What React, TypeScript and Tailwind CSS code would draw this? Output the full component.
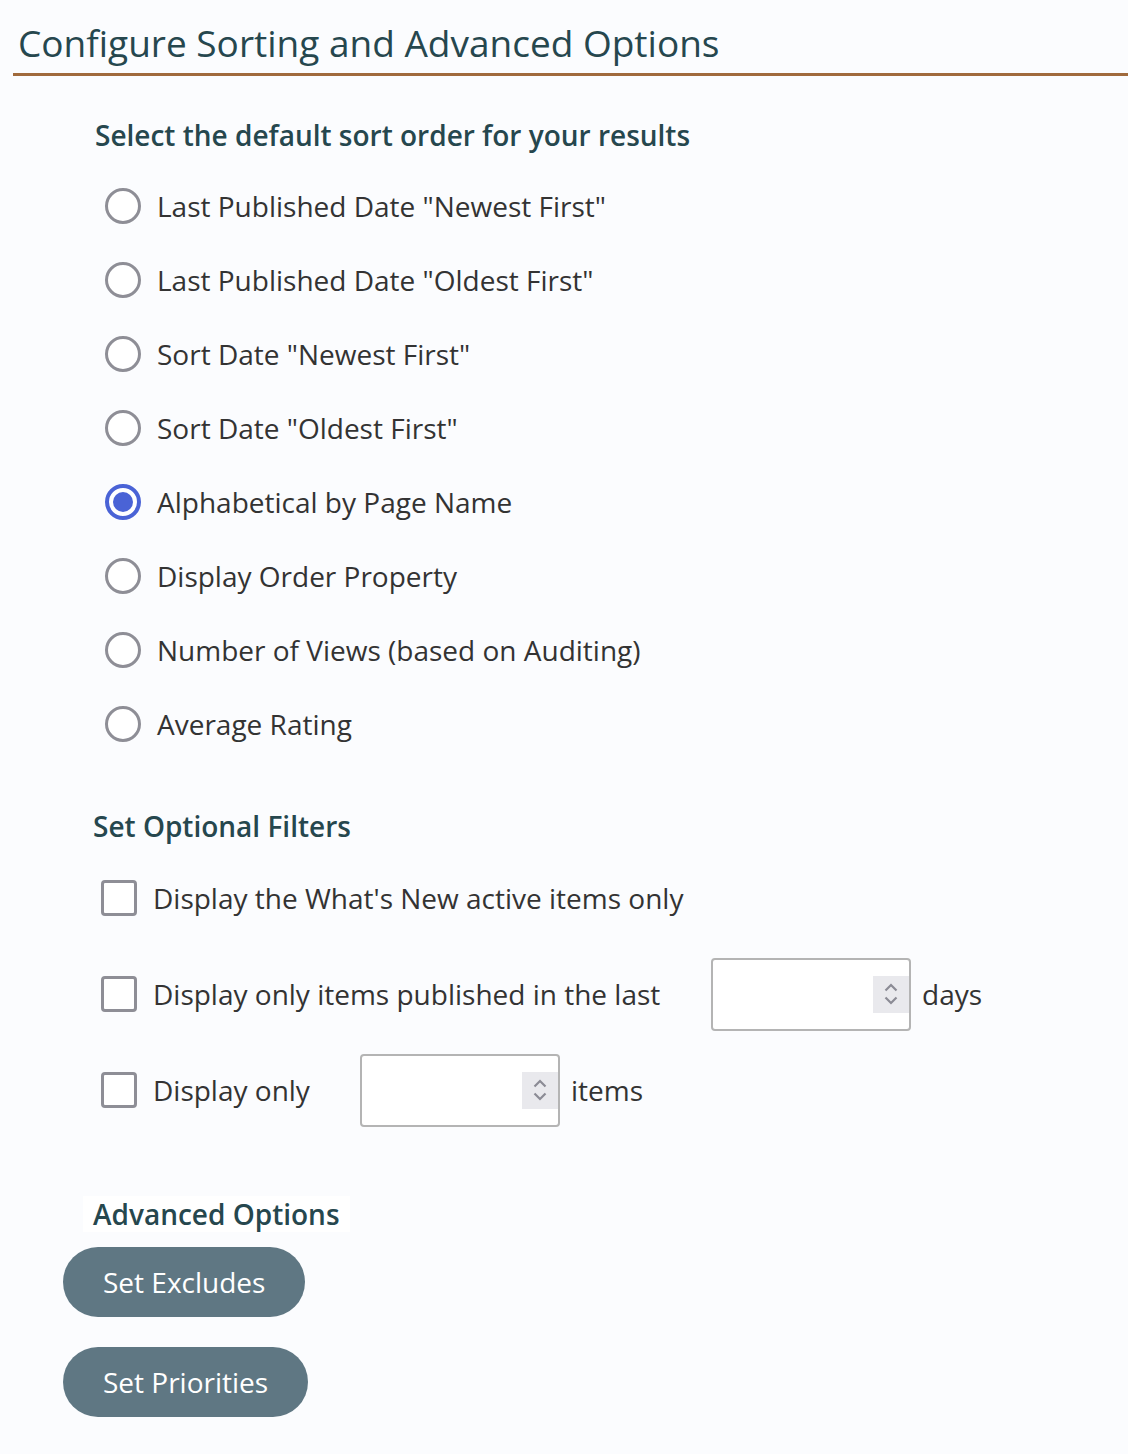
import { useState } from "react";

const sortOptions = [
  'Last Published Date "Newest First"',
  'Last Published Date "Oldest First"',
  'Sort Date "Newest First"',
  'Sort Date "Oldest First"',
  "Alphabetical by Page Name",
  "Display Order Property",
  "Number of Views (based on Auditing)",
  "Average Rating",
];

function Radio({ checked }: { checked: boolean }) {
  return checked ? (
    <span className="flex h-[36px] w-[36px] shrink-0 items-center justify-center rounded-full border-[4px] border-[#4a63d6] bg-white">
      <span className="h-[20px] w-[20px] rounded-full bg-[#4a63d6]" />
    </span>
  ) : (
    <span className="h-[36px] w-[36px] shrink-0 rounded-full border-[3px] border-[#8e8e96] bg-white" />
  );
}

function Checkbox() {
  return (
    <span className="h-[36px] w-[36px] shrink-0 rounded-[4px] border-[3px] border-[#8e8e96] bg-white" />
  );
}

function NumberBox() {
  return (
    <div className="flex h-[73px] w-[200px] items-center justify-end rounded-[4px] border-2 border-[#b4b4b4] bg-white">
      <div className="flex h-[37px] w-[36px] flex-col items-center justify-center gap-[4px] bg-[#e9e9ed]">
        <svg width="16" height="10" viewBox="0 0 16 10" fill="none">
          <path d="M2.5 8.5 8 3 13.5 8.5" stroke="#8b8b95" strokeWidth="2.2" />
        </svg>
        <svg width="16" height="10" viewBox="0 0 16 10" fill="none">
          <path d="M2.5 1.5 8 7 13.5 1.5" stroke="#8b8b95" strokeWidth="2.2" />
        </svg>
      </div>
    </div>
  );
}

export default function App() {
  const [sort] = useState(4);

  return (
    <div
      className="min-h-screen bg-[#fbfcfe] pb-[37px] text-[#333]"
      style={{ fontFamily: '"Open Sans", sans-serif' }}
    >
      {/* Title */}
      <div className="pl-[13px]">
        <h1 className="border-b-[3px] border-[#a06a3c] pb-[7px] pl-[5px] pt-[19px] text-[37px] leading-[47px] text-[#26474e]">
          Configure Sorting and Advanced Options
        </h1>
      </div>

      {/* Sort order */}
      <h2 className="ml-[95px] mt-[39px] text-[28px] font-semibold leading-[40px] text-[#26474e]">
        Select the default sort order for your results
      </h2>
      <div className="ml-[105px] mt-[14px] flex flex-col">
        {sortOptions.map((label, i) => (
          <label key={label} className="flex h-[74px] items-center gap-[16px]">
            <Radio checked={i === sort} />
            <span className="text-[28px] leading-[40px]">{label}</span>
          </label>
        ))}
      </div>

      {/* Filters */}
      <h2 className="ml-[93px] mt-[45px] text-[28px] font-semibold leading-[40px] text-[#26474e]">
        Set Optional Filters
      </h2>
      <div className="ml-[101px] mt-[20px] flex flex-col">
        <label className="flex h-[64px] items-center gap-[16px]">
          <Checkbox />
          <span className="text-[28px] leading-[40px]">Display the What's New active items only</span>
        </label>
        <label className="mt-[32px] flex h-[64px] items-center">
          <Checkbox />
          <span className="ml-[16px] w-[558px] text-[28px] leading-[40px]">
            Display only items published in the last
          </span>
          <NumberBox />
          <span className="ml-[11px] text-[28px] leading-[40px]">days</span>
        </label>
        <label className="mt-[32px] flex h-[64px] items-center">
          <Checkbox />
          <span className="ml-[16px] w-[207px] text-[28px] leading-[40px]">Display only</span>
          <NumberBox />
          <span className="ml-[11px] text-[28px] leading-[40px]">items</span>
        </label>
      </div>

      {/* Advanced */}
      <h2 className="ml-[83px] mt-[74px]">
        <span className="inline-block bg-white px-[10px] text-[28px] font-semibold leading-[36px] text-[#26474e]">
          Advanced Options
        </span>
      </h2>
      <div className="ml-[63px] mt-[15px] flex flex-col items-start gap-[30px]">
        <button className="h-[70px] rounded-full bg-[#5f7783] px-[40px] text-[28px] text-white">
          Set Excludes
        </button>
        <button className="h-[70px] rounded-full bg-[#5f7783] px-[40px] text-[28px] text-white">
          Set Priorities
        </button>
      </div>
    </div>
  );
}
